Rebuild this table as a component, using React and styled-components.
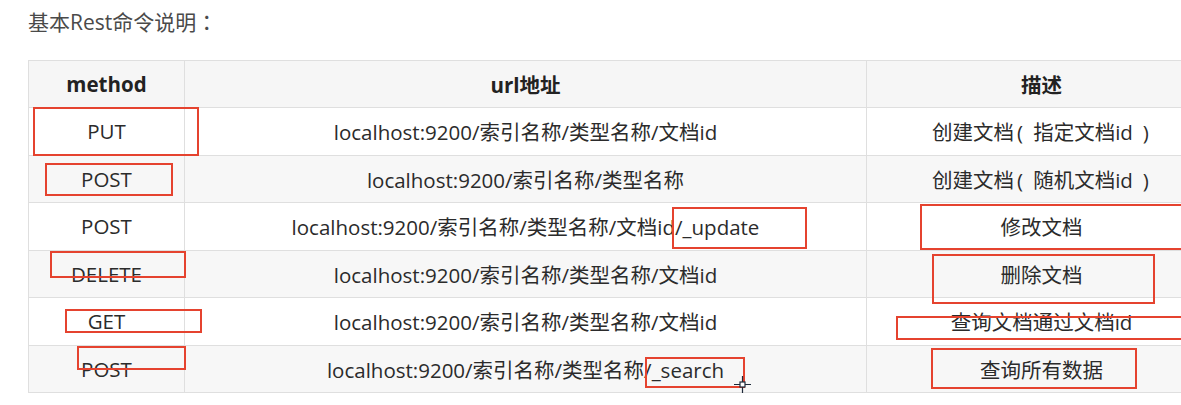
import React from "react";
import styled, { createGlobalStyle } from "styled-components";

const GlobalStyle = createGlobalStyle`
  html, body {
    margin: 0;
    padding: 0;
    background: #ffffff;
    overflow: hidden;
  }
  body {
    font-family: "Open Sans", "Noto Sans CJK SC", sans-serif;
    color: #333333;
  }
`;

const rows = [
  { method: "PUT", url: "localhost:9200/索引名称/类型名称/文档id", desc: "创建文档(指定文档id)" },
  { method: "POST", url: "localhost:9200/索引名称/类型名称", desc: "创建文档(随机文档id)" },
  { method: "POST", url: "localhost:9200/索引名称/类型名称/文档id/_update", desc: "修改文档" },
  { method: "DELETE", url: "localhost:9200/索引名称/类型名称/文档id", desc: "删除文档" },
  { method: "GET", url: "localhost:9200/索引名称/类型名称/文档id", desc: "查询文档通过文档id" },
  { method: "POST", url: "localhost:9200/索引名称/类型名称/_search", desc: "查询所有数据" },
];

// red annotation boxes drawn over the screenshot
const marks = [
  { left: 33, top: 107, width: 166, height: 49 },
  { left: 45, top: 163, width: 128, height: 33 },
  { left: 50, top: 251, width: 136, height: 27 },
  { left: 65, top: 309, width: 137, height: 24 },
  { left: 77, top: 346, width: 109, height: 24 },
  { left: 672, top: 207, width: 135, height: 42 },
  { left: 645, top: 357, width: 100, height: 31 },
  { left: 920, top: 204, width: 270, height: 46 },
  { left: 932, top: 254, width: 223, height: 50 },
  { left: 896, top: 316, width: 300, height: 24 },
  { left: 931, top: 348, width: 206, height: 41 },
];

// punctuation gets its own spacing
const withPunct = (text) =>
  text.split(/([：()])/).map((part, i) => {
    if (part === "：") return <Colon key={i}>{part}</Colon>;
    if (part === "(") return <Paren key={i} $open>{part}</Paren>;
    if (part === ")") return <Paren key={i}>{part}</Paren>;
    return part;
  });

const App = () => {
  return (
    <Page>
      <GlobalStyle />
      <Title>{withPunct("基本Rest命令说明：")}</Title>
      <Table>
        <colgroup>
          <col style={{ width: 156 }} />
          <col style={{ width: 682 }} />
          <col style={{ width: 350 }} />
        </colgroup>
        <thead>
          <tr>
            <Th>method</Th>
            <Th>url地址</Th>
            <Th>描述</Th>
          </tr>
        </thead>
        <tbody>
          {rows.map((row, i) => (
            <Row key={i} $alt={i % 2 === 1}>
              <Td>{row.method}</Td>
              <Td>{row.url}</Td>
              <Td>{withPunct(row.desc)}</Td>
            </Row>
          ))}
        </tbody>
      </Table>
      <Overlay>
        {marks.map((m, i) => (
          <Mark
            key={i}
            style={{ left: m.left, top: m.top, width: m.width, height: m.height }}
          />
        ))}
        <Cursor width="17" height="17" viewBox="0 0 17 17">
          <path d="M8.5 0v6M8.5 11v6M0 8.5h6M11 8.5h6" stroke="#1e2a3a" strokeWidth="1.2" />
          <rect x="6" y="6" width="5" height="5" fill="#ffffff" stroke="#1e2a3a" strokeWidth="1.2" />
        </Cursor>
      </Overlay>
    </Page>
  );
};

const Page = styled.div`
  position: relative;
  width: 1181px;
  height: 405px;
  padding-left: 28px;
  box-sizing: border-box;
`;

const Title = styled.div`
  height: 30px;
  padding-top: 6px;
  font-size: 21px;
  line-height: 30px;
  color: #4a4a4a;
`;

const Colon = styled.span`
  font-family: "Noto Sans CJK TC", sans-serif;
`;

const Paren = styled.span`
  margin: ${(p) => (p.$open ? "0 10px 0 3px" : "0 2px 0 10px")};
`;

const Table = styled.table`
  margin-top: 24px;
  width: 1188px;
  table-layout: fixed;
  border-collapse: collapse;
  font-size: 20.5px;
`;

const Th = styled.th`
  height: 46px;
  padding: 0;
  background: #f6f6f6;
  border: 1px solid #dfdfdf;
  font-weight: 700;
  color: #222222;
  text-align: center;
  white-space: nowrap;
`;

const Row = styled.tr`
  background: ${(p) => (p.$alt ? "#f7f7f7" : "#ffffff")};
`;

const Td = styled.td`
  height: 46.5px;
  padding: 0;
  border: 1px solid #dfdfdf;
  text-align: center;
  white-space: nowrap;
  color: #2b2b2b;
`;

const Overlay = styled.div`
  position: absolute;
  inset: 0;
  pointer-events: none;
`;

const Mark = styled.div`
  position: absolute;
  box-sizing: border-box;
  border: 2px solid #e5432f;
`;

const Cursor = styled.svg`
  position: absolute;
  left: 734px;
  top: 376px;
`;

export default App;
